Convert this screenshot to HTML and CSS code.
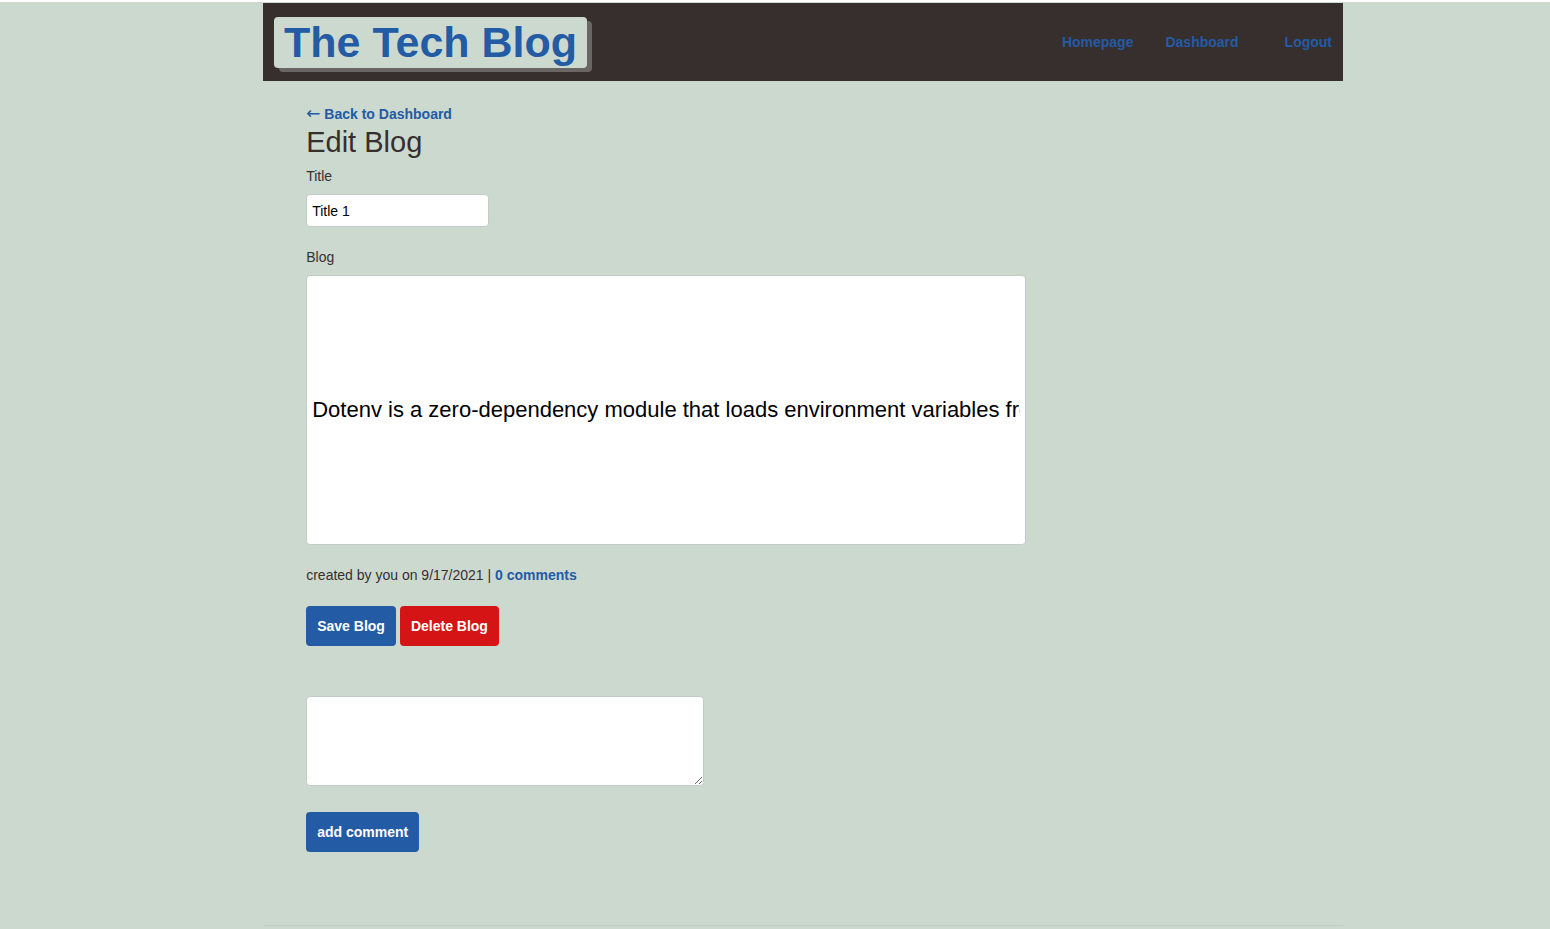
FILE: index.html
```html
<!DOCTYPE html>
<html lang="en">
<head>
<meta charset="utf-8">
<meta name="viewport" content="width=device-width, initial-scale=1">
<title>The Tech Blog</title>
<link rel="stylesheet" href="styles.css">
</head>
<body>
<div class="wrapper">
  <header class="site-header">
    <h1 class="brand"><a href="/">The Tech Blog</a></h1>
    <nav class="site-nav">
      <a href="/">Homepage</a>
      <a href="/dashboard">Dashboard</a>
      <a class="logout" href="/logout">Logout</a>
    </nav>
  </header>
  <main class="content">
    <a class="back-link" href="/dashboard"><span class="arrow">←</span> Back to Dashboard</a>
    <h2 class="page-title">Edit Blog</h2>
    <form class="edit-form">
      <div class="field">
        <label for="post-title">Title</label>
        <input class="input title-input" id="post-title" type="text" value="Title 1">
      </div>
      <div class="field">
        <label for="post-body">Blog</label>
        <input class="input body-input" id="post-body" type="text" value="Dotenv is a zero-dependency module that loads environment variables from a .env file into process.env">
      </div>
      <p class="meta">created by you on 9/17/2021 | <a href="#comments">0 comments</a></p>
      <div class="actions">
        <button class="button" type="submit">Save Blog</button>
        <button class="button danger" type="button">Delete Blog</button>
      </div>
    </form>
    <form class="comment-form" id="comments">
      <textarea class="input comment-input" aria-label="Comment"></textarea>
      <button class="button" type="submit">add comment</button>
    </form>
  </main>
  <footer class="site-footer"></footer>
</div>
</body>
</html>
```
FILE: styles.css
```css
* {
  box-sizing: border-box;
}

html {
  background: #ccd9cf;
}

body {
  margin: 0;
  border-top: 2px solid #fff;
  padding-top: 1px;
  display: grid;
  grid-template-columns: 263fr 1080fr 207fr;
  color: #372f2e;
  font: 14px/20px "Liberation Sans", Arial, sans-serif;
}

h1,
h2,
p {
  margin: 0;
}

a {
  color: #235ba4;
  font-weight: bold;
  text-decoration: none;
}

.wrapper {
  grid-column: 2;
  min-width: 0;
}

.site-header {
  display: flex;
  flex-wrap: wrap;
  align-items: center;
  justify-content: space-between;
  padding: 14px 11px 13px;
  background: #372f2e;
}

.brand a {
  display: block;
  padding: 0 10px;
  border-radius: 4px;
  background: #ccd9cf;
  box-shadow: 5px 4px 0 #6b6564;
  font-size: 43px;
  line-height: 51px;
}

.site-nav {
  display: flex;
  gap: 32px;
  padding-bottom: 2px;
}

.logout {
  margin-left: 14px;
}

.content {
  padding: 23px 4% 73px;
}

.back-link {
  display: block;
}

.arrow {
  font-family: "DejaVu Sans", sans-serif;
  font-size: 17px;
  font-weight: normal;
  line-height: 1;
}

.page-title {
  font-size: 29px;
  font-weight: normal;
  line-height: 36px;
}

.edit-form {
  padding-top: 6px;
}

.field {
  display: flex;
  flex-direction: column;
  align-items: flex-start;
  gap: 8px;
  margin-bottom: 20px;
}

.input {
  max-width: 100%;
  padding: 5px;
  border: 1px solid #c4cbc8;
  border-radius: 4px;
  background: #fff;
  color: #000;
  font: inherit;
}

.title-input {
  width: 183px;
  height: 33px;
}

.body-input {
  width: 720px;
  height: 270px;
  font-size: 22px;
}

.actions {
  display: flex;
  gap: 4px;
  margin-top: 21px;
}

.button {
  padding: 10px 11px;
  border: 0;
  border-radius: 4px;
  background: #235ba4;
  color: #fff;
  font: inherit;
  font-weight: bold;
}

.danger {
  background: #d51416;
}

.comment-form {
  display: flex;
  flex-direction: column;
  align-items: flex-start;
  gap: 26px;
  margin-top: 50px;
}

.comment-input {
  width: 398px;
  height: 90px;
}

.site-footer {
  border-top: 1px solid #c4cec7;
}
```
